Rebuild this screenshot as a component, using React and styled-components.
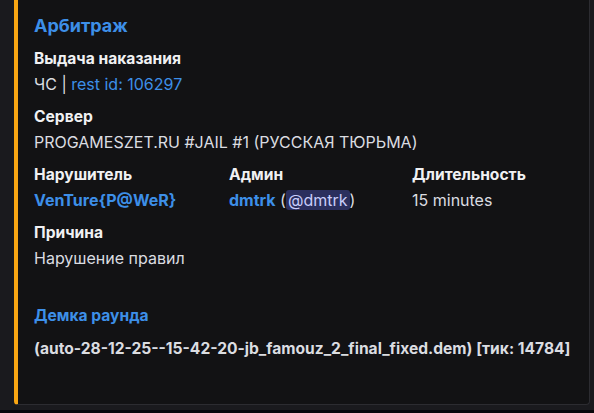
import React from 'react'
import styled, { createGlobalStyle } from 'styled-components'

const GlobalStyle = createGlobalStyle`
  html, body {
    margin: 0;
    padding: 0;
    background: #1a1a1e;
  }
  body {
    font-family: Inter, "Noto Sans", sans-serif;
    -webkit-font-smoothing: antialiased;
  }
`

const Page = styled.div`
  width: 594px;
  height: 413px;
  overflow: hidden;
  box-sizing: border-box;
  padding: 0 4px 0 14px;
  background: linear-gradient(#1a1a1e 0 410px, #08080a 410px);
`

const Embed = styled.div`
  box-sizing: border-box;
  height: 405px;
  background: #121214;
  border-left: 4px solid #f9a613;
  border-right: 1px solid #2c2c31;
  border-bottom: 1px solid #2c2c31;
  border-radius: 0 0 4px 4px;
  padding: 14px 16px 0 16px;
  display: flex;
  flex-direction: column;
`

const Title = styled.div`
  color: #3d8fe8;
  font-size: 18px;
  font-weight: 700;
  line-height: 24px;
  margin-bottom: 11px;
`

const Fields = styled.div`
  display: grid;
  grid-template-columns: 195px 183px 1fr;
  row-gap: 13px;
`

const Field = styled.div`
  grid-column: ${(p) => (p.$inline ? 'auto' : '1 / -1')};
  min-width: 0;
`

const Name = styled.div`
  color: ${(p) => (p.$link ? '#3d8fe8' : '#f0f1f3')};
  font-size: 15.6px;
  font-weight: 700;
  line-height: 20px;
  margin-bottom: 5px;
`

const Value = styled.div`
  color: #dbdde1;
  font-size: ${(p) => (p.$bold ? '15.6px' : '16px')};
  font-weight: ${(p) => (p.$bold ? 700 : 400)};
  line-height: 20px;
  white-space: nowrap;
`

const Link = styled.span`
  color: #3d8fe8;
  font-weight: ${(p) => (p.$bold ? 700 : 400)};
`

const Mention = styled.span`
  color: #c9cdfb;
  background: #2b2f5e;
  border-radius: 3px;
  padding: 0 2px;
`

const Demo = styled.div`
  margin-top: 38px;
`

const DemoValue = styled(Value)`
  margin-top: 13px;
`

export default function App() {
  return (
    <>
      <GlobalStyle />
      <Page>
        <Embed>
          <Title>Арбитраж</Title>
          <Fields>
            <Field>
              <Name>Выдача наказания</Name>
              <Value>ЧС | <Link>rest id: 106297</Link></Value>
            </Field>
            <Field>
              <Name>Сервер</Name>
              <Value>PROGAMESZET.RU #JAIL #1 (РУССКАЯ ТЮРЬМА)</Value>
            </Field>
            <Field $inline>
              <Name>Нарушитель</Name>
              <Value><Link $bold>VenTure{'{'}P@WeR{'}'}</Link></Value>
            </Field>
            <Field $inline>
              <Name>Админ</Name>
              <Value><Link $bold>dmtrk</Link> (<Mention>@dmtrk</Mention>)</Value>
            </Field>
            <Field $inline>
              <Name>Длительность</Name>
              <Value>15 minutes</Value>
            </Field>
            <Field>
              <Name>Причина</Name>
              <Value>Нарушение правил</Value>
            </Field>
          </Fields>
          <Demo>
            <Name $link>Демка раунда</Name>
            <DemoValue $bold>(auto-28-12-25--15-42-20-jb_famouz_2_final_fixed.dem) [тик: 14784]</DemoValue>
          </Demo>
        </Embed>
      </Page>
    </>
  )
}
